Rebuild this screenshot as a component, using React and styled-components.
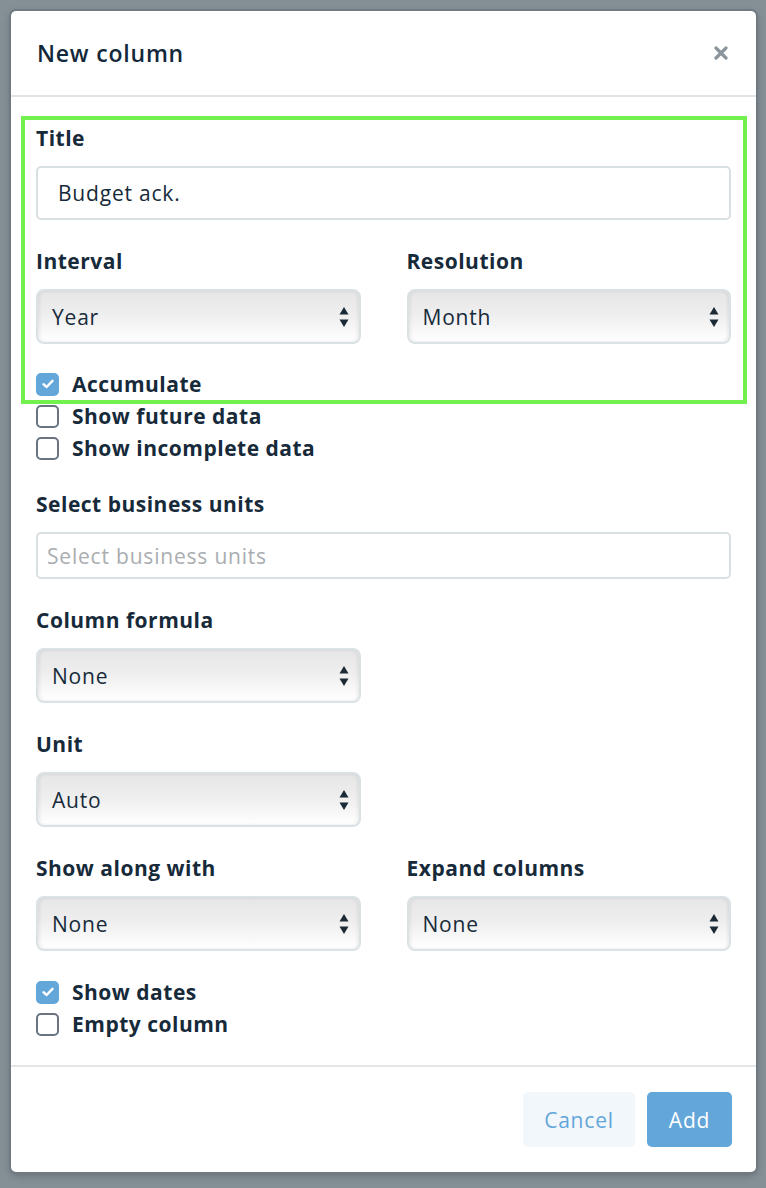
import React from 'react';
import styled, { createGlobalStyle } from 'styled-components';

const GlobalStyle = createGlobalStyle`
  html, body {
    margin: 0;
    padding: 0;
    background: #858f96;
    font-family: "Open Sans", Lato, sans-serif;
    color: #172a3a;
  }
`;

const Backdrop = styled.div`
  min-height: 1188px;
  padding: 11px 10px 0 11px;
  box-sizing: border-box;
`;

const Modal = styled.div`
  position: relative;
  width: 745px;
  background: #fff;
  border-radius: 5px;
  box-shadow: 0 0 0 2px #6f7a82, 0 3px 8px rgba(0, 0, 0, 0.25);
`;

const Header = styled.div`
  height: 84px;
  display: flex;
  align-items: center;
  justify-content: space-between;
  padding: 0 26px 0 26px;
  border-bottom: 2px solid #e1e4e7;
`;

const Heading = styled.h2`
  margin: 0;
  font-size: 23px;
  font-weight: 600;
  letter-spacing: 0.8px;
  color: #13283a;
`;

const Close = styled.button`
  border: 0;
  background: none;
  padding: 0;
  width: 18px;
  height: 18px;
  display: flex;
  align-items: center;
  justify-content: center;
  cursor: pointer;
`;

const Body = styled.div`
  padding: 29px 25px 25px;
`;

const Field = styled.div`
  display: flex;
  flex-direction: column;
  margin-bottom: ${p => p.$mb ?? 29}px;
  width: ${p => (p.$half ? '325px' : 'auto')};
`;

const Row = styled.div`
  display: grid;
  grid-template-columns: 1fr 1fr;
  column-gap: 46px;
  margin-bottom: ${p => p.$mb ?? 29}px;
`;

const Label = styled.label`
  font-size: 21px;
  font-weight: 700;
  line-height: 24px;
  letter-spacing: 0.5px;
  margin-bottom: 16px;
`;

const TextInput = styled.div`
  height: ${p => p.$h || 54}px;
  box-sizing: border-box;
  border: 2px solid #d9e0e3;
  border-radius: 5px;
  display: flex;
  align-items: center;
  padding-left: ${p => p.$pl || 20}px;
  font-size: 21px;
  letter-spacing: 0.8px;
  color: ${p => (p.$placeholder ? '#a9adb0' : '#172a3a')};
`;

const SelectBox = styled.div`
  height: 55px;
  box-sizing: border-box;
  border: 2px solid #dbe2e5;
  border-radius: 8px;
  background: linear-gradient(#e6e6e6 0%, #eeeeee 45%, #ffffff 100%);
  box-shadow: inset 2px 0 3px rgba(0, 0, 0, 0.06), inset -2px 0 3px rgba(0, 0, 0, 0.06);
  display: flex;
  align-items: center;
  justify-content: space-between;
  padding: 0 10px 0 14px;
  font-size: 21px;
  letter-spacing: 0.8px;
  color: #172a3a;
`;

const Checks = styled.div`
  display: flex;
  flex-direction: column;
  margin-bottom: ${p => p.$mb ?? 28}px;
`;

const CheckRow = styled.div`
  display: flex;
  align-items: center;
  height: 32px;
  gap: 13px;
  font-size: 21px;
  font-weight: 700;
  letter-spacing: 0.5px;
`;

const Box = styled.span`
  width: 23px;
  height: 23px;
  box-sizing: border-box;
  border-radius: 5px;
  display: flex;
  align-items: center;
  justify-content: center;
  background: ${p => (p.$on ? '#62a6da' : '#fff')};
  border: ${p => (p.$on ? '0' : '2px solid #69747f')};
`;

const Footer = styled.div`
  border-top: 2px solid #e3e5e8;
  padding: 25px 24px 25px;
  display: flex;
  justify-content: flex-end;
  gap: 12px;
`;

const Button = styled.button`
  height: 55px;
  width: ${p => p.$w}px;
  padding: 0;
  border: 0;
  border-radius: 5px;
  font-family: inherit;
  font-size: 21px;
  letter-spacing: 0.8px;
  background: ${p => (p.$primary ? '#62a6da' : '#f2f7fb')};
  color: ${p => (p.$primary ? '#fff' : '#62a6da')};
`;

const Highlight = styled.div`
  position: absolute;
  left: 10px;
  top: 105px;
  width: 726px;
  height: 288px;
  box-sizing: border-box;
  border: 4px solid #72f04e;
  pointer-events: none;
`;

const Arrows = () => (
  <svg width="10" height="22" viewBox="0 0 10 22">
    <path d="M5 1 L9.5 8.5 H0.5 Z" fill="#1c2a36" />
    <path d="M5 21 L9.5 13.5 H0.5 Z" fill="#1c2a36" />
  </svg>
);

const Select = ({ value }) => (
  <SelectBox>
    <span>{value}</span>
    <Arrows />
  </SelectBox>
);

const Check = ({ on, children }) => (
  <CheckRow>
    <Box $on={on}>
      {on && (
        <svg width="12" height="10" viewBox="0 0 12 10">
          <path d="M1.5 5.2 L4.6 8 L10.5 1.8" stroke="#fff" strokeWidth="2.4" fill="none" strokeLinecap="round" strokeLinejoin="round" />
        </svg>
      )}
    </Box>
    {children}
  </CheckRow>
);

export default function App() {
  return (
    <>
      <GlobalStyle />
      <Backdrop>
        <Modal>
          <Header>
            <Heading>New column</Heading>
            <Close aria-label="Close">
              <svg width="14" height="14" viewBox="0 0 14 14">
                <path d="M2 2 L12 12 M12 2 L2 12" stroke="#8a949b" strokeWidth="3.2" strokeLinecap="round" />
              </svg>
            </Close>
          </Header>
          <Body>
            <Field>
              <Label>Title</Label>
              <TextInput>Budget ack.</TextInput>
            </Field>
            <Row $mb={24}>
              <Field $mb={0}>
                <Label>Interval</Label>
                <Select value="Year" />
              </Field>
              <Field $mb={0}>
                <Label>Resolution</Label>
                <Select value="Month" />
              </Field>
            </Row>
            <Checks>
              <Check on>Accumulate</Check>
              <Check>Show future data</Check>
              <Check>Show incomplete data</Check>
            </Checks>
            <Field>
              <Label>Select business units</Label>
              <TextInput $h={47} $pl={9} $placeholder>Select business units</TextInput>
            </Field>
            <Field $half>
              <Label>Column formula</Label>
              <Select value="None" />
            </Field>
            <Field $half>
              <Label>Unit</Label>
              <Select value="Auto" />
            </Field>
            <Row $mb={25}>
              <Field $mb={0}>
                <Label>Show along with</Label>
                <Select value="None" />
              </Field>
              <Field $mb={0}>
                <Label>Expand columns</Label>
                <Select value="None" />
              </Field>
            </Row>
            <Checks $mb={0}>
              <Check on>Show dates</Check>
              <Check>Empty column</Check>
            </Checks>
          </Body>
          <Footer>
            <Button $w={112}>Cancel</Button>
            <Button $w={85} $primary>Add</Button>
          </Footer>
          <Highlight />
        </Modal>
      </Backdrop>
    </>
  );
}
